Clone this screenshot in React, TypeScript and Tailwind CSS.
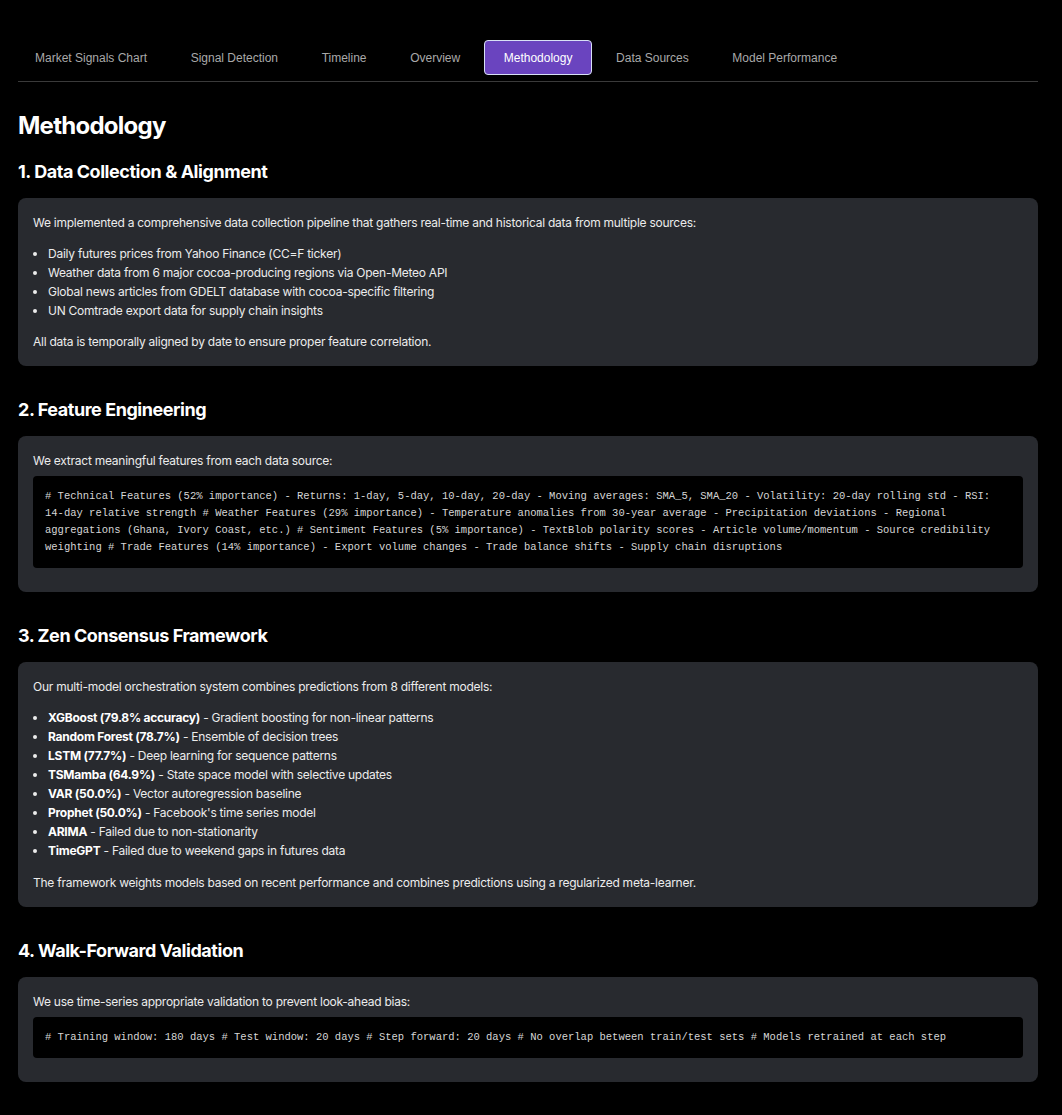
const tabs = [
  "Market Signals Chart",
  "Signal Detection",
  "Timeline",
  "Overview",
  "Methodology",
  "Data Sources",
  "Model Performance",
];

const models: [string, string][] = [
  ["XGBoost (79.8% accuracy)", "Gradient boosting for non-linear patterns"],
  ["Random Forest (78.7%)", "Ensemble of decision trees"],
  ["LSTM (77.7%)", "Deep learning for sequence patterns"],
  ["TSMamba (64.9%)", "State space model with selective updates"],
  ["VAR (50.0%)", "Vector autoregression baseline"],
  ["Prophet (50.0%)", "Facebook's time series model"],
  ["ARIMA", "Failed due to non-stationarity"],
  ["TimeGPT", "Failed due to weekend gaps in futures data"],
];

function Section({ title, children }: { title: string; children: React.ReactNode }) {
  return (
    <section className="mb-[30px]">
      <h2 className="text-[18px] leading-[28px] font-bold tracking-[-0.45px] text-white mb-3">{title}</h2>
      <div className="rounded-lg bg-[#282a2f] p-[15px] text-[12px] leading-[19px] tracking-[-0.25px] text-[#ececec]">
        {children}
      </div>
    </section>
  );
}

function Code({ children }: { children: string }) {
  return (
    <div className="mt-[6px] mb-[9px] rounded bg-black px-3 py-[12px] font-['Liberation_Mono',monospace] text-[10.5px] leading-[17px] tracking-normal text-[#d6d6d6]">
      {children}
    </div>
  );
}

export default function App() {
  return (
    <div className="min-h-screen bg-black pl-[18px] pr-[24px] pt-[40px] pb-[3px] font-['Inter',sans-serif] text-[#ececec]">
      <div className="border-b border-[#3a3a3a] pb-[6px]">
        <div className="-ml-[3px] flex gap-[3.6px] font-['Liberation_Sans',Arial,sans-serif] text-[12px]">
          {tabs.map((t) =>
            t === "Methodology" ? (
              <button key={t} className="h-[35px] rounded-[4px] border border-[#d8e0f5] bg-[#6a44bf] px-[19px] text-white">
                {t}
              </button>
            ) : (
              <button key={t} className="h-[35px] border border-transparent px-[19px] text-[#a9a9a9]">
                {t}
              </button>
            )
          )}
        </div>
      </div>

      <h1 className="mt-[28px] mb-[16px] text-[24px] leading-[32px] font-bold tracking-[-0.75px] text-white">Methodology</h1>

      <Section title="1. Data Collection & Alignment">
        <p>
          We implemented a comprehensive data collection pipeline that gathers real-time and historical data from
          multiple sources:
        </p>
        <ul className="my-3 list-disc pl-[15px]">
          <li>Daily futures prices from Yahoo Finance (CC=F ticker)</li>
          <li>Weather data from 6 major cocoa-producing regions via Open-Meteo API</li>
          <li>Global news articles from GDELT database with cocoa-specific filtering</li>
          <li>UN Comtrade export data for supply chain insights</li>
        </ul>
        <p>All data is temporally aligned by date to ensure proper feature correlation.</p>
      </Section>

      <Section title="2. Feature Engineering">
        <p>We extract meaningful features from each data source:</p>
        <Code>
          {
            "# Technical Features (52% importance) - Returns: 1-day, 5-day, 10-day, 20-day - Moving averages: SMA_5, SMA_20 - Volatility: 20-day rolling std - RSI: 14-day relative strength # Weather Features (29% importance) - Temperature anomalies from 30-year average - Precipitation deviations - Regional aggregations (Ghana, Ivory Coast, etc.) # Sentiment Features (5% importance) - TextBlob polarity scores - Article volume/momentum - Source credibility weighting # Trade Features (14% importance) - Export volume changes - Trade balance shifts - Supply chain disruptions"
          }
        </Code>
      </Section>

      <Section title="3. Zen Consensus Framework">
        <p>Our multi-model orchestration system combines predictions from 8 different models:</p>
        <ul className="mt-3 mb-[13px] list-disc pl-[15px]">
          {models.map(([name, desc]) => (
            <li key={name}>
              <strong className="font-bold text-white">{name}</strong> - {desc}
            </li>
          ))}
        </ul>
        <p>The framework weights models based on recent performance and combines predictions using a regularized meta-learner.</p>
      </Section>

      <Section title="4. Walk-Forward Validation">
        <p>We use time-series appropriate validation to prevent look-ahead bias:</p>
        <Code>
          {
            "# Training window: 180 days # Test window: 20 days # Step forward: 20 days # No overlap between train/test sets # Models retrained at each step"
          }
        </Code>
      </Section>
    </div>
  );
}
